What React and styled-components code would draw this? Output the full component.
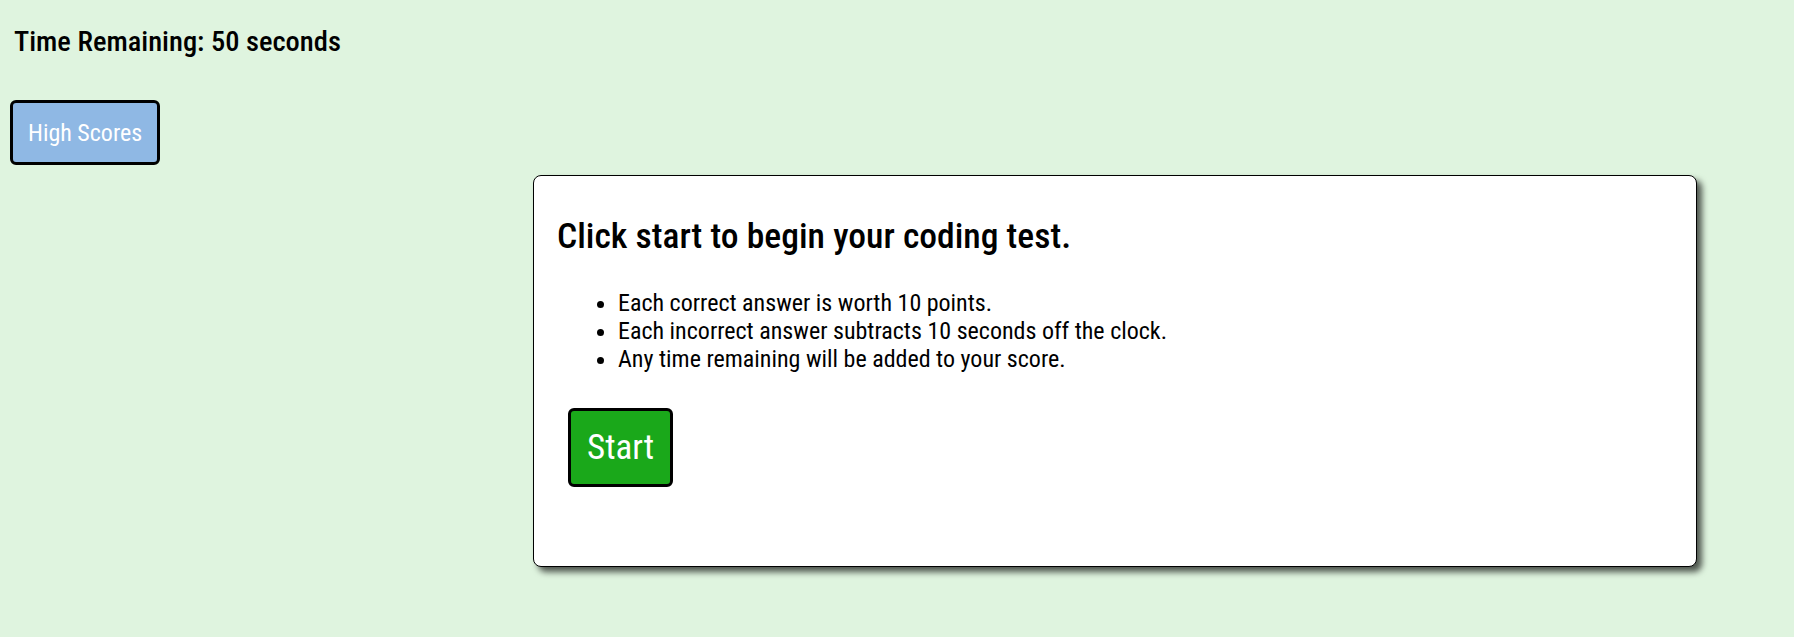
import styled, { createGlobalStyle } from "styled-components";

const GlobalStyle = createGlobalStyle`
    html, body {
        margin: 0;
        padding: 0;
        background-color: #dff4df;
        font-family: "Roboto Condensed", "Liberation Sans Narrow", Roboto, sans-serif;
        color: #000;
    }
`;

const rules = [
    "Each correct answer is worth 10 points.",
    "Each incorrect answer subtracts 10 seconds off the clock.",
    "Any time remaining will be added to your score.",
];

export default function App() {
    return (
        <>
            <GlobalStyle />
            <Page>
                <Timer>Time Remaining: 50 seconds</Timer>
                <ScoresButton>High Scores</ScoresButton>
                <Card>
                    <Heading>Click start to begin your coding test.</Heading>
                    <RuleList>
                        {rules.map((rule) => (
                            <li key={rule}>{rule}</li>
                        ))}
                    </RuleList>
                    <StartButton>Start</StartButton>
                </Card>
            </Page>
        </>
    );
}

const Page = styled.div`
    display: flex;
    flex-direction: column;
    align-items: flex-start;
    padding: 24px 0 60px 10px;
`;

const Timer = styled.h2`
    margin: 0 0 40px 4px;
    font-size: 28.5px;
    line-height: 36px;
    font-weight: 500;
`;

const ScoresButton = styled.button`
    box-sizing: border-box;
    height: 65px;
    padding: 0 15px;
    font-family: inherit;
    font-size: 24px;
    color: #fff;
    background-color: #8fb8e4;
    border: 3px solid #000;
    border-radius: 6px;
    cursor: pointer;
`;

const Card = styled.section`
    box-sizing: border-box;
    width: 1164px;
    margin: 10px 0 0 523px;
    padding: 38px 23px 79px;
    background-color: #fff;
    border: 1px solid #000;
    border-radius: 8px;
    box-shadow: 5px 5px 6px rgba(0, 0, 0, 0.65);
`;

const Heading = styled.h1`
    margin: 0 0 31px;
    font-size: 35.6px;
    line-height: 44px;
    font-weight: 500;
`;

const RuleList = styled.ul`
    margin: 0 0 35px;
    padding-left: 61px;
    font-size: 24px;
    line-height: 28px;
`;

const StartButton = styled.button`
    box-sizing: border-box;
    height: 79px;
    margin-left: 11px;
    padding: 0 16px;
    font-family: inherit;
    font-size: 35px;
    color: #fff;
    background-color: #1aa81a;
    border: 3px solid #000;
    border-radius: 6px;
    cursor: pointer;
`;
